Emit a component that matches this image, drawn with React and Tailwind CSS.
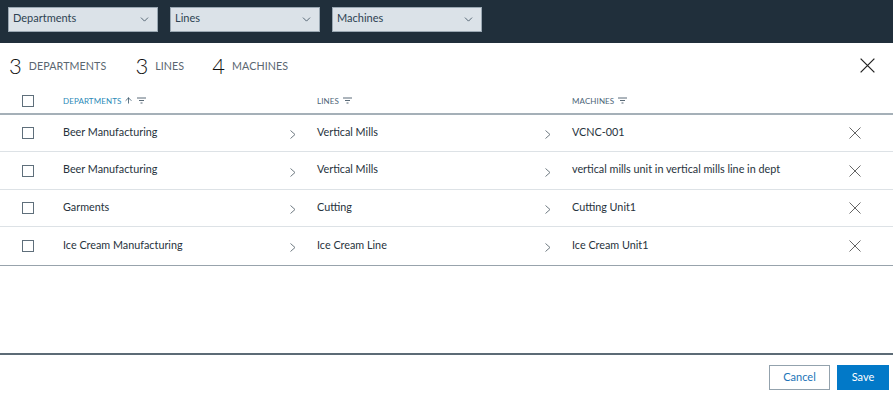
import { ChevronDown, ArrowUp } from "lucide-react";

const rows = [
  { dept: "Beer Manufacturing", line: "Vertical Mills", machine: "VCNC-001" },
  { dept: "Beer Manufacturing", line: "Vertical Mills", machine: "vertical mills unit in vertical mills line in dept" },
  { dept: "Garments", line: "Cutting", machine: "Cutting Unit1" },
  { dept: "Ice Cream Manufacturing", line: "Ice Cream Line", machine: "Ice Cream Unit1" },
];

function FilterIcon() {
  return (
    <svg width="9" height="7" viewBox="0 0 9 7" className="ml-1 inline-block">
      <path d="M0 1h9M2 3.5h5M3.5 6h2" stroke="#5b6b78" strokeWidth="1" fill="none" />
    </svg>
  );
}

function Cross({ size, color }) {
  return (
    <svg width={size} height={size} viewBox="0 0 12 12" className="shrink-0">
      <path d="M0.5 0.5L11.5 11.5M11.5 0.5L0.5 11.5" stroke={color} strokeWidth="1" fill="none" />
    </svg>
  );
}

function Chevron() {
  return (
    <svg width="6" height="9" viewBox="0 0 6 9" className="mr-[21px] mt-[5px] shrink-0">
      <path d="M0.5 0.5L5 4.5L0.5 8.5" stroke="#6f7a82" strokeWidth="1" fill="none" />
    </svg>
  );
}

function Select({ label }) {
  return (
    <div className="flex h-[25px] w-[150px] items-center justify-between border border-[#9aa8b3] bg-[#dbe2e8] pl-[4px] pr-[6px] text-[11px] text-[#2e4252]">
      <span className="-mt-[2px]">{label}</span>
      <ChevronDown size={13} strokeWidth={1.4} />
    </div>
  );
}

function Checkbox() {
  return <div className="h-[12px] w-[12px] border border-[#5f6f7b] bg-white" />;
}

function Stat({ n, label, className = "" }) {
  return (
    <div className={`flex items-center ${className}`}>
      <span className="text-[22px] font-light leading-none text-[#111]">{n}</span>
      <span className="ml-[7px] mt-[2px] text-[10.7px] tracking-[0.1px] text-[#5a6670]">{label}</span>
    </div>
  );
}

export default function App() {
  return (
    <div className="flex h-[399px] w-[893px] flex-col bg-white text-[#2b3a45]" style={{ fontFamily: "Lato, 'Open Sans', sans-serif" }}>
      <div className="flex h-[43px] shrink-0 items-start gap-[12px] bg-[#202f3b] pl-[8px] pt-[7px]">
        <Select label="Departments" />
        <Select label="Lines" />
        <Select label="Machines" />
      </div>

      <div className="flex h-[45px] shrink-0 items-center pl-[9px] pr-[18px]">
        <Stat n="3" label="DEPARTMENTS" />
        <Stat n="3" label="LINES" className="ml-[29px]" />
        <Stat n="4" label="MACHINES" className="ml-[28px]" />
        <div className="ml-auto">
          <Cross size={15} color="#222" />
        </div>
      </div>

      <div className="flex h-[27px] shrink-0 items-center border-b-[2px] border-[#a5b0b8] text-[8px] tracking-[0.1px]">
        <div className="flex w-[63px] justify-start pl-[22px]">
          <Checkbox />
        </div>
        <div className="flex w-[254px] items-center text-[#2d8ab8]">
          DEPARTMENTS
          <ArrowUp size={9} strokeWidth={2} color="#2b4a5f" className="ml-[3px]" />
          <FilterIcon />
        </div>
        <div className="flex w-[255px] items-center text-[#4d6577]">
          LINES
          <FilterIcon />
        </div>
        <div className="flex items-center text-[#4d6577]">
          MACHINES
          <FilterIcon />
        </div>
      </div>

      <div className="border-b border-[#98a3ac]">
        {rows.map((r, i) => (
          <div
            key={i}
            className={`flex h-[37.4px] items-center text-[10.8px] text-[#27333d] ${i < rows.length - 1 ? "border-b border-[#dde2e6]" : ""}`}
          >
            <div className="flex w-[63px] pl-[22px]">
              <Checkbox />
            </div>
            <div className="flex w-[254px] items-center justify-between pb-[2px]">
              <span>{r.dept}</span>
              <Chevron />
            </div>
            <div className="flex w-[255px] items-center justify-between pb-[2px]">
              <span>{r.line}</span>
              <Chevron />
            </div>
            <div className="flex flex-1 items-center justify-between pb-[2px] pr-[32px]">
              <span>{r.machine}</span>
              <div className="mt-[2px]">
                <Cross size={12} color="#666" />
              </div>
            </div>
          </div>
        ))}
      </div>

      <div className="flex-1" />

      <div className="flex h-[46px] shrink-0 items-center justify-end gap-[7px] border-t-[2px] border-[#5c6b76] pr-[4px] text-[11px]">
        <button className="h-[25px] w-[61px] border border-[#93a2ad] bg-white text-[#1b74b8]">Cancel</button>
        <button className="h-[25px] w-[52px] bg-[#0279c8] text-white">Save</button>
      </div>
    </div>
  );
}
